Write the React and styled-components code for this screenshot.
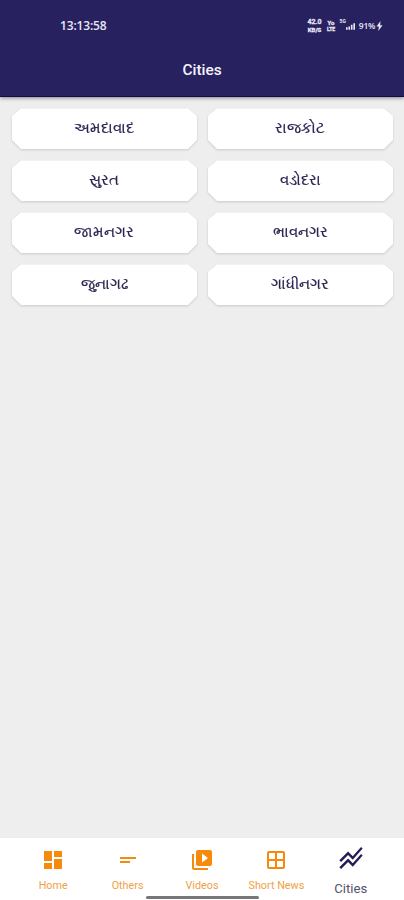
import React from 'react'
import styled, { createGlobalStyle } from 'styled-components'
import {
    MdDashboard,
    MdShortText,
    MdVideoLibrary,
    MdOutlineWindow,
    MdStackedLineChart
} from 'react-icons/md'

const cities = ['અમદાવાદ', 'રાજકોટ', 'સુરત', 'વડોદરા', 'જામનગર', 'ભાવનગર', 'જુનાગઢ', 'ગાંધીનગર']

const tabs = [
    { label: 'Home', icon: MdDashboard },
    { label: 'Others', icon: MdShortText },
    { label: 'Videos', icon: MdVideoLibrary },
    { label: 'Short News', icon: MdOutlineWindow },
    { label: 'Cities', icon: MdStackedLineChart, active: true }
]

const App = () => {
    return (
        <Screen>
            <GlobalStyle />
            <Header>
                <StatusBar>
                    <Clock>13:13:58</Clock>
                    <StatusIcons>
                        <Speed>
                            <span>42.0</span>
                            <span>KB/S</span>
                        </Speed>
                        <Sim>
                            <span>Yo</span>
                            <span>LTE</span>
                        </Sim>
                        <Network>5G</Network>
                        <Signal viewBox="0 0 11 9">
                            <path d="M0 6h2v3H0zM3 5h2v4H3zM6 3h2v6H6zM9 1h2v8H9z" />
                        </Signal>
                        <Battery>91%</Battery>
                        <Bolt viewBox="0 0 6 10">
                            <path d="M4 0L0 5.6h2.4L1.8 10L6 4.2H3.6z" />
                        </Bolt>
                    </StatusIcons>
                </StatusBar>
                <Title>Cities</Title>
            </Header>
            <CityGrid>
                {cities.map((city) => (
                    <CardShadow key={city}>
                        <CityCard>{city}</CityCard>
                    </CardShadow>
                ))}
            </CityGrid>
            <BottomNav>
                {tabs.map(({ label, icon: Icon, active }) => (
                    <Tab key={label} $active={active}>
                        <Icon />
                        <span>{label}</span>
                    </Tab>
                ))}
                <HomeIndicator />
            </BottomNav>
        </Screen>
    )
}

const GlobalStyle = createGlobalStyle`
    *{
        box-sizing: border-box;
    }
    body{
        margin: 0;
        font-family: Roboto, 'Noto Sans', sans-serif;
    }
`;

const Screen = styled.div`
    width: 404px;
    height: 900px;
    display: flex;
    flex-direction: column;
    overflow: hidden;
    background: #eeeeee;
`;

const Header = styled.header`
    height: 97px;
    flex: none;
    color: #f4f3fa;
    background: #282160;
    border-bottom: 1px solid #120948;
    box-shadow: 0 1px 4px rgba(0, 0, 0, 0.45);
`;

const StatusBar = styled.div`
    height: 52px;
    padding: 0 21px 0 60px;
    display: flex;
    align-items: center;
    justify-content: space-between;
    color: #e9e7f4;
`;

const Clock = styled.span`
    font: 600 12px/14px 'Open Sans', sans-serif;
    letter-spacing: -0.15px;
`;

const StatusIcons = styled.div`
    display: flex;
    align-items: center;
    font-weight: 700;
    svg{
        fill: #e9e7f4;
    }
`;

const Speed = styled.div`
    width: 16px;
    margin-right: 4px;
    display: flex;
    flex-direction: column;
    align-items: center;
    font-size: 7px;
    line-height: 7px;
    -webkit-text-stroke: 0.3px currentColor;
    span + span{
        font-size: 6px;
        line-height: 7px;
    }
`;

const Sim = styled(Speed)`
    width: 9px;
    margin-right: 4px;
    font-size: 6px;
    line-height: 6px;
    span + span{
        font-size: 5px;
        line-height: 6px;
    }
`;

const Network = styled.span`
    font-size: 5px;
    line-height: 5px;
    align-self: flex-start;
`;

const Signal = styled.svg`
    width: 9px;
    height: 8px;
    margin-right: 4px;
`;

const Battery = styled.span`
    font: 600 8.5px/10px 'Open Sans', sans-serif;
    letter-spacing: -0.3px;
`;

const Bolt = styled.svg`
    width: 7px;
    height: 10px;
    margin-left: 1px;
`;

const Title = styled.h1`
    margin: 0;
    height: 37px;
    font-size: 15.4px;
    font-weight: 500;
    line-height: 37px;
    text-align: center;
`;

const CityGrid = styled.main`
    flex: 1;
    padding: 11px 11px 0 12px;
    display: grid;
    grid-template-columns: 1fr 1fr;
    grid-auto-rows: 41px;
    gap: 11px;
`;

const CardShadow = styled.div`
    filter: drop-shadow(0 1px 1px rgba(0, 0, 0, 0.15));
`;

const CityCard = styled.div`
    height: 41px;
    padding: 0 1px 1px 0;
    display: flex;
    align-items: center;
    justify-content: center;
    color: #2a2552;
    font-size: 15.3px;
    -webkit-text-stroke: 0.2px currentColor;
    background: #ffffff;
    clip-path: polygon(9px 0.5px, calc(100% - 9px) 0.5px, 100% 8px, 100% calc(100% - 9px), calc(100% - 9px) 100%, 9px 100%, 0 calc(100% - 9px), 0 8px);
`;

const BottomNav = styled.nav`
    position: relative;
    height: 62px;
    flex: none;
    padding: 0 16px 0 16px;
    display: grid;
    grid-template-columns: repeat(5, 1fr);
    background: #ffffff;
`;

const Tab = styled.div`
    padding-top: ${({ $active }) => ($active ? '6px' : '10px')};
    display: flex;
    flex-direction: column;
    align-items: center;
    color: ${({ $active }) => ($active ? '#241d58' : '#f58a0b')};
    svg{
        width: ${({ $active }) => ($active ? '28px' : '24px')};
        height: ${({ $active }) => ($active ? '28px' : '24px')};
    }
    span{
        margin-top: ${({ $active }) => ($active ? '10px' : '7px')};
        font-size: ${({ $active }) => ($active ? '13.2px' : '10.8px')};
        line-height: 14px;
        white-space: nowrap;
        color: ${({ $active }) => ($active ? '#56526c' : '#f2a044')};
    }
`;

/* gesture bar that lies over the tabs */
const HomeIndicator = styled.div`
    position: absolute;
    left: 146px;
    bottom: 1px;
    width: 113px;
    height: 3px;
    border-radius: 2px;
    background: #77777a;
`;

export default App
